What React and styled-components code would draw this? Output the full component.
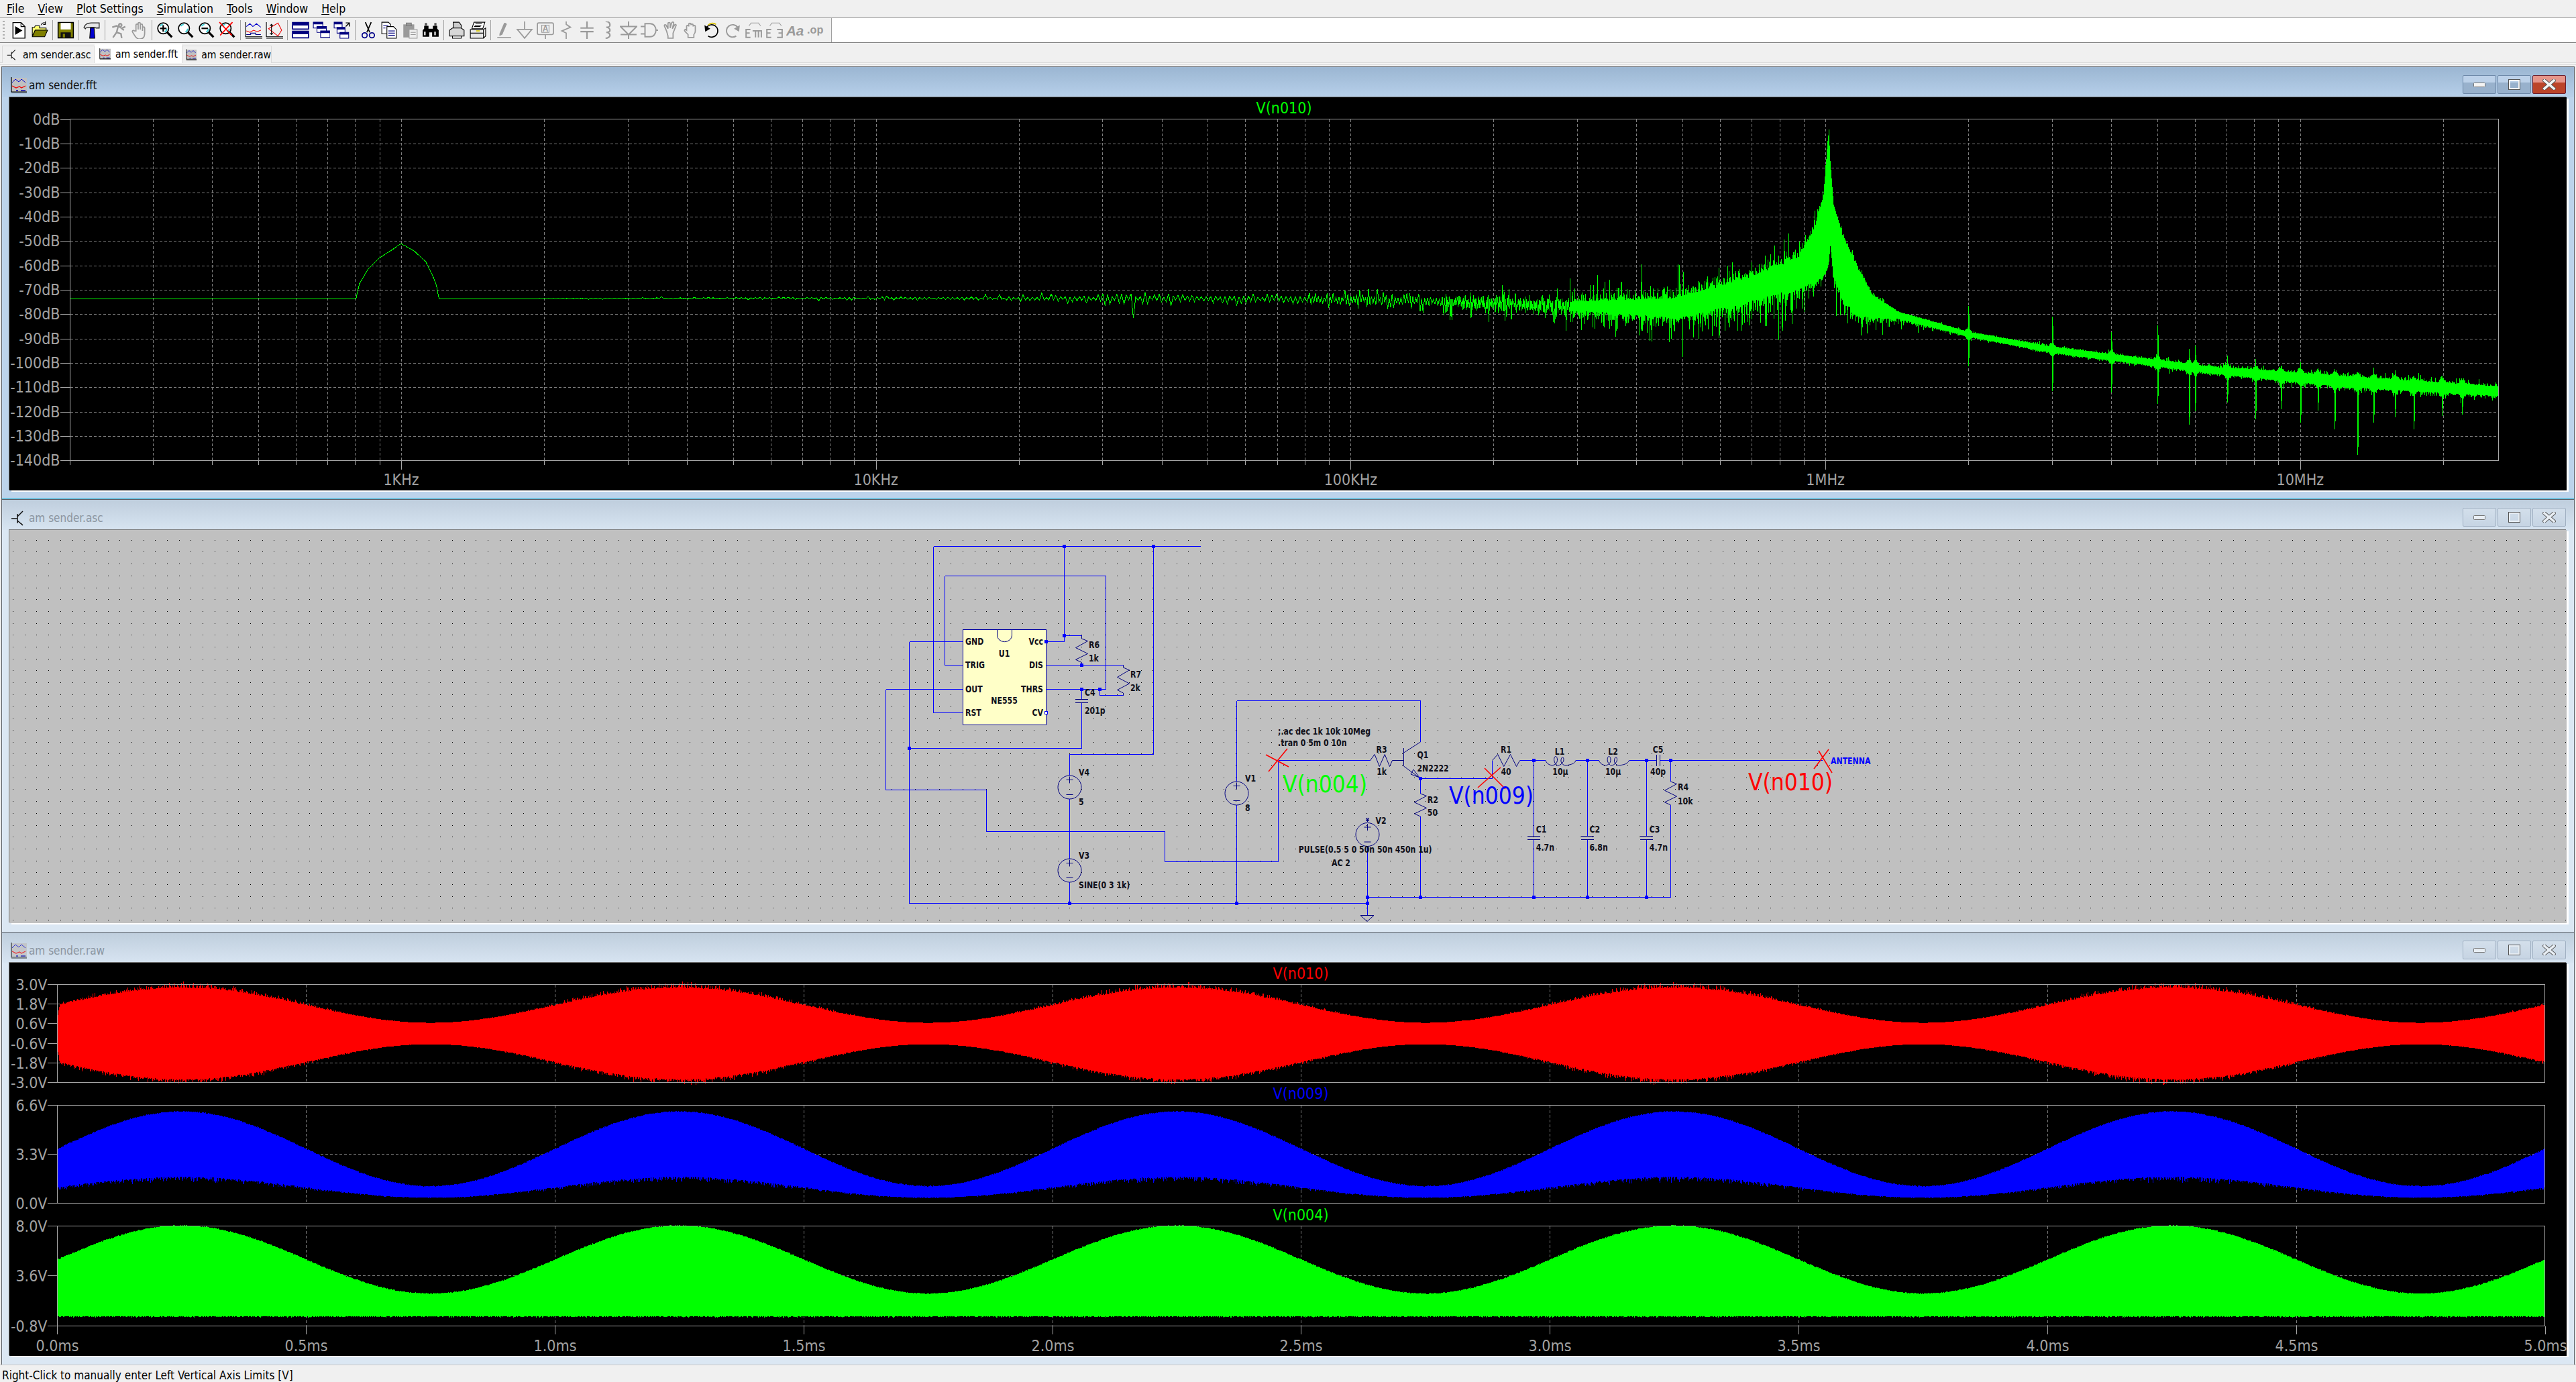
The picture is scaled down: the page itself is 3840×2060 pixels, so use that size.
import React from 'react';
import styled, { createGlobalStyle } from 'styled-components';

const UI_FONT = `"DejaVu Sans", "Liberation Sans", sans-serif`;

const GlobalStyle = createGlobalStyle`
  html, body {
    margin: 0;
    padding: 0;
    background: #f0f0f0;
    overflow: hidden;
  }
`;

const Page = styled.div`
  width: 3840px;
  height: 2060px;
  display: flex;
  flex-direction: column;
  background: #f0f0f0;
  font-family: ${UI_FONT};
  font-stretch: condensed;
  color: #000;
  overflow: hidden;
`;

const MenuBar = styled.div`
  height: 26px;
  display: flex;
  align-items: center;
  gap: 20px;
  padding-left: 10px;
  font-size: 17.6px;
  border-bottom: 1px solid #a0a0a0;
`;

const MenuItem = styled.span`
  white-space: nowrap;
  u { text-underline-offset: 2px; }
`;

const ToolRow = styled.div`
  height: 36px;
  display: flex;
  background: #fff;
  border-bottom: 1px solid #808080;
`;

const Tools = styled.div`
  width: 1239px;
  display: flex;
  align-items: center;
  background: #f0f0f0;
  border-right: 1px solid #a0a0a0;
`;

const Gripper = styled.div`
  width: 3px;
  height: 28px;
  margin: 0 5.5px 0 4px;
  background: repeating-linear-gradient(to bottom, #b0b0b0 0 2px, transparent 2px 5px);
`;

const ToolBtn = styled.div`
  width: 31px;
  height: 36px;
  flex: none;
  display: flex;
  align-items: center;
  justify-content: center;
`;

const ToolSep = styled.div`
  width: 8px;
  height: 30px;
  flex: none;
  background: linear-gradient(#a0a0a0, #a0a0a0) center / 1px 100% no-repeat;
`;

const TabStrip = styled.div`
  height: 35px;
  box-sizing: border-box;
  padding: 2px 0 0 3px;
  display: flex;
  align-items: flex-end;
  background: linear-gradient(to bottom, #f0f0f0 0 29px, #d8d8d8 29px 30px, #f4f4f4 30px 32px, #d8d8d8 32px 33px, #f4f4f4 33px);
`;

const Tab = styled.div`
  height: ${p => (p.$active ? '28px' : '26px')};
  margin-bottom: 5px;
  box-sizing: border-box;
  display: flex;
  align-items: center;
  gap: 7px;
  width: ${p => p.$width}px;
  padding-left: ${p => p.$pad}px;
  font-size: 15.6px;
  white-space: nowrap;
  background: ${p => (p.$active ? '#fff' : '#f0f0f0')};
  border: 1px solid ${p => (p.$active ? '#fff' : '#dadada')};
  border-bottom: none;
`;

const Mdi = styled.div`
  display: flex;
  flex-direction: column;
  padding: 0 2px;
`;

const Win = styled.div`
  height: 645px;
  box-sizing: border-box;
  display: flex;
  flex-direction: column;
  border: 1px solid #5a5f66;
  border-bottom: none;
  background: ${p => (p.$active ? '#bcd3eb' : '#dbe7f3')};
`;

const TitleBar = styled.div`
  height: 45px;
  flex: none;
  box-sizing: border-box;
  display: flex;
  padding: 12px 12px 0 13px;
  background: ${p => (p.$active
    ? 'linear-gradient(to bottom, #9bb6d2, #b7d0ea)'
    : 'linear-gradient(to bottom, #bfcedd, #d7e4f1)')};
`;

const TitleText = styled.div`
  height: 26px;
  padding-top: 2px;
  display: flex;
  align-items: center;
  gap: 3px;
  font-size: 17px;
  color: ${p => (p.$active ? '#111' : '#8b95a0')};
`;

const Caption = styled.div`
  margin-left: auto;
  display: flex;
  gap: 2px;
`;

const CapBtn = styled.div`
  width: 50px;
  height: 28px;
  box-sizing: border-box;
  display: flex;
  align-items: center;
  justify-content: center;
  border-radius: 2px;
  border: 1px solid ${p => (p.$close && p.$active ? '#6b2030' : p.$active ? '#6d88a8' : '#a0b0c2')};
  background: ${p => (p.$close && p.$active
    ? 'linear-gradient(to bottom, #e6958a 0 40%, #bb4429 40%)'
    : p.$active
      ? 'linear-gradient(to bottom, #bcd1e9 0 40%, #98b1cc 40%)'
      : 'linear-gradient(to bottom, #d3dfeb, #c6d4e3)')};
`;

const Client = styled.div`
  width: 3812px;
  height: 586px;
  flex: none;
  margin: 0 11px;
  background: ${p => p.$bg};
  box-shadow: -1px -1px 0 #7a7a7a, 3px 2px 0 #fff;
`;

const WinFoot = styled.div`
  flex: 1;
  border-bottom: ${p => (p.$active ? '1px solid #38b6d6' : 'none')};
`;

const StatusBar = styled.div`
  flex: 1;
  box-sizing: border-box;
  border-top: 1px solid #c8c8c8;
  padding: 5px 0 0 3px;
  font-size: 17px;
  white-space: nowrap;
  overflow: hidden;
`;

const Canvas = styled.svg`
  display: block;
`;

const AxisText = styled.text`
  font-family: ${UI_FONT};
  font-stretch: condensed;
  font-size: 23px;
  dominant-baseline: central;
  fill: ${p => p.$color || '#a3a3a3'};
`;

const PartText = styled.text`
  font-family: ${UI_FONT};
  font-stretch: condensed;
  font-weight: bold;
  font-size: 14.5px;
  dominant-baseline: central;
  fill: ${p => p.$color || '#10101a'};
`;

const ProbeText = styled.text`
  font-family: ${UI_FONT};
  font-stretch: condensed;
  font-size: 35px;
  dominant-baseline: central;
  fill: ${p => p.$color};
`;

const IconGlyph = styled.text`
  font-family: "Liberation Sans", sans-serif;
  font-weight: bold;
  fill: #9a9a9a;
`;

// ---- little icons ----------------------------------------------------------

const G = '#9a9a9a';
const Plain = { fill: 'none', stroke: G, strokeWidth: 1.6 };

const Lens = ({ children }) => (
  <>
    <path d="M14 14l7.5 7.5" stroke="#000" strokeWidth="3" />
    <circle cx="9.5" cy="9.5" r="7.5" fill="#fff" stroke="#000" strokeWidth="1.6" />
    <path d="M5 6.5a6 6 0 0 1 4-2.5M14.5 10a5 5 0 0 1-3 4.5" fill="none" stroke="#30d0d8" strokeWidth="1.6" />
    {children}
  </>
);

const icons = {
  run: <><path d="M4 1.5h11l5.5 5.5v16H4z" fill="#fff" stroke="#000" strokeWidth="1.3" /><path d="M15 1.5V7h5.5" fill="none" stroke="#000" /><path d="M7 6.5l10 6-10 6z" fill="#000" /></>,
  open: <><path d="M2 8h3l1-2h6v3h9v3H6l-4 8z" fill="#ffff70" stroke="#000" /><path d="M6 12h17l-4 9H2z" fill="#808000" stroke="#000" /><path d="M14 5c1-3 4-4 6-3M20 0v4h-3" fill="none" stroke="#000" /></>,
  save: <><path d="M1.5 1.5h21v21h-21z" fill="#808000" stroke="#000" strokeWidth="1.4" /><path d="M5 2h14v9H5z" fill="#fff" /><path d="M5 15h14v8H5z" fill="#111" /><path d="M8 17h3v5H8z" fill="#808000" /></>,
  hammer: <><path d="M1 8c2-5 6-6 10-6h11v7h-4l-3-1H9C6 8 4 8 3 10z" fill="#e8e8e8" stroke="#222" strokeWidth="1.2" /><path d="M10 9h5l1 14H9z" fill="#0000d0" stroke="#000" /></>,
  runner: <path d="M15 3a2 2 0 1 0 .01 0M4 8l6-2 5 2 5 4M12 7l-2 8-5 7M10 15l6 2 1 6M16 10l6-3" fill="none" stroke={G} strokeWidth="2.2" />,
  stop: <path d="M8 13V5a1.4 1.4 0 0 1 3 0v6-8a1.4 1.4 0 0 1 3 0v8-6a1.4 1.4 0 0 1 3 0v8-4a1.4 1.4 0 0 1 3 0v7c0 5-2 8-6 8h-2c-3 0-4-2-6-5l-3-5c0-2 2-2 3-1z" {...Plain} />,
  zoomIn: <Lens><path d="M5 9.5h9M9.5 5v9" stroke="#000" strokeWidth="2" /></Lens>,
  zoomRect: <Lens />,
  zoomOut: <Lens><path d="M5 9.5h9" stroke="#000" strokeWidth="2" /></Lens>,
  zoomOff: <Lens><path d="M1 1l17 18M19 1L2 19" stroke="#f00" strokeWidth="1.6" /></Lens>,
  auto: <><path d="M1 1v20h23M1 23h23" fill="none" stroke="#000" /><path d="M2 7l5-4 4 4 5-4 6 5" fill="none" stroke="#00c" /><path d="M2 13l5 2 5-3 5 2 5-2" fill="none" stroke="#e00" /><path d="M2 18h6v-2h7v2h7" fill="none" stroke="#008" /></>,
  vert: <><path d="M1 1v20h23M1 23h23" fill="none" stroke="#000" /><path d="M4 10L17 2l5 10-5 8z" fill="none" stroke="#e00" /><path d="M8 4v14M6 6l2-2 2 2M6 16l2 2 2-2" fill="none" stroke="#000" /></>,
  tile: <><path d="M1 1.5h22v9H1zM1 13.5h22v9H1z" fill="#fff" stroke="#000080" strokeWidth="1.6" /><path d="M1 1.5h22v4H1zM1 13.5h22v4H1z" fill="#000080" /></>,
  cascade: <><path d="M1 1h13v8H1zM6 7h13v8H6zM11 13h13v9H11z" fill="#fff" stroke="#000080" /><path d="M1 1h13v3H1zM6 7h13v3H6zM11 13h13v3H11z" fill="#000080" /></>,
  arrange: <><path d="M1 1h11v8H1zM5 8h11v8H5zM9 15h12v8H9z" fill="#fff" stroke="#000080" /><path d="M1 1h11v3H1zM5 8h11v3H5zM9 15h12v3H9z" fill="#000080" /><path d="M22 7V2h-5M22 2l-5 5" fill="none" stroke="#000" strokeWidth="1.3" /></>,
  cut: <><path d="M8 1l6 14M16 1l-6 14" stroke="#000" strokeWidth="1.6" /><circle cx="7" cy="19" r="3.5" fill="none" stroke="#008" strokeWidth="1.6" /><circle cx="17" cy="19" r="3.5" fill="none" stroke="#008" strokeWidth="1.6" /></>,
  copy: <><path d="M2 1h9l3 3v13H2z" fill="#fff" stroke="#000" /><path d="M9 7h9l4 4v12H9z" fill="#fff" stroke="#000" /><path d="M4 6h7M4 9h3M11 13h9M11 16h9M11 19h9" stroke="#000080" /></>,
  paste: <><path d="M3 4h15v18H3z" fill={G} /><path d="M7 2h7v4H7z" fill={G} stroke="#777" /><path d="M11 11h11v12H11z" fill="#eee" stroke={G} /><path d="M13 15h7M13 18h7" stroke={G} /></>,
  find: <><path d="M3 6h6v4l1 2v9H1v-9l2-2zM15 6h6v4l2 2v9h-9v-9l1-2z" fill="#000" /><path d="M9 10h6v5H9z" fill="#000" /><path d="M4 2h3v4H4zM17 2h3v4h-3z" fill="#555" /><path d="M3 14h2v5H3zM17 14h2v5h-2z" fill="#fff" /></>,
  print: <><path d="M7 1h8l3 4v6H7z" fill="#ccc" stroke="#000" /><path d="M2 12l4-3h12l4 3v8H2z" fill="#d8d8d8" stroke="#000" /><path d="M6 20h12v3H6z" fill="#fff" stroke="#000" /></>,
  setup: <><path d="M7 1h15l-3 9H4z" fill="#fff" stroke="#000" /><path d="M9 3h9M8 5h9M7 7h9" stroke="#000" /><path d="M2 11h18l3-2v11l-3 3H2z" fill="#e8e8e8" stroke="#000" /><path d="M2 16h18M20 11v12" stroke="#000" /><path d="M10 13h5" stroke="#d8c800" strokeWidth="1.6" /></>,
  pencil: <><path d="M6 17L12 3c1-2 4-1 4 1l-6 14-4 2z" fill={G} /><path d="M3 22h19" stroke={G} strokeWidth="1.4" /></>,
  ground: <path d="M12 0v11M2 11h20L12 23z" {...Plain} />,
  label: <><path d="M12 18v6M3 2h18a2 2 0 0 1 2 2v12a2 2 0 0 1-2 2H3a2 2 0 0 1-2-2V4a2 2 0 0 1 2-2z" {...Plain} /><path d="M7 5h10v10H7z" {...Plain} strokeWidth="1" /><IconGlyph x="12" y="14" fontSize="11" textAnchor="middle">A</IconGlyph></>,
  res: <path d="M12 0v4l6 4-12 5 6 3v8" {...Plain} />,
  cap: <path d="M12 0v9M3 9h18M3 14h18M12 14v10" {...Plain} strokeWidth="2" />,
  ind: <path d="M9 0c5 0 6 3 6 5s-3 3-5 3c3 0 5 2 5 4s-2 3-5 3c3 0 5 2 5 4s-3 4-6 4" {...Plain} strokeWidth="2" />,
  diode: <path d="M12 0v7M1 7h22L12 18zM1 18h22M12 18v6" {...Plain} strokeWidth="1.8" />,
  gate: <path d="M6 3h7c5 0 8 4 8 9s-3 9-8 9H6zM0 7h6M0 17h6M21 12h3" {...Plain} strokeWidth="1.8" />,
  move: <path d="M7 13L4 6c0-2 2-2 3 0l2 4 0-7c0-2 3-2 3 0v6l2-7c1-2 3-1 3 0l-2 8 3-5c1-2 3 0 2 1l-4 10v7H9v-3z" {...Plain} />,
  drag: <path d="M6 12V7c0-2 3-2 3 0V4c0-2 3-2 3 0v1c0-2 3-2 3 0v2c0-2 3-2 3 0v6c0 3-1 4-2 5v4H8v-4l-4-4c-2-2 0-4 2-2z" {...Plain} />,
  undo: <><path d="M5 8a8.5 8.5 0 1 1 2 12" fill="none" stroke="#000" strokeWidth="1.6" /><path d="M7 5a8.5 8.5 0 0 1 11-1" fill="none" stroke="#d8c000" strokeWidth="1.6" /><path d="M2 5l1 9 7-4z" fill="#000" /></>,
  redo: <><path d="M19 8a8.5 8.5 0 1 0-2 12" {...Plain} strokeWidth="1.8" /><path d="M22 5l-1 9-7-4z" fill={G} /></>,
  em: <><path d="M6 6l3-4h10l3 4" fill="none" stroke={G} strokeWidth="1" /><path d="M8 11H2v11h6M2 16h5" {...Plain} strokeWidth="1.8" /><path d="M11 13h12v9M15 13v9M19 13v9" {...Plain} strokeWidth="1.8" /></>,
  eg: <><path d="M6 6l3-4h10l3 4" fill="none" stroke={G} strokeWidth="1" /><path d="M8 11H2v11h6M2 16h5" {...Plain} strokeWidth="1.8" /><path d="M16 11h7v11h-7M18 16h5" {...Plain} strokeWidth="1.8" /></>,
  text: <IconGlyph x="0" y="19" fontSize="19" fontStyle="italic">Aa</IconGlyph>,
  op: <IconGlyph x="0" y="17" fontSize="15">.op</IconGlyph>,
};

const Icon = ({ name }) => (
  <svg width="26" height="26" viewBox="0 0 24 24" shapeRendering="geometricPrecision">{icons[name]}</svg>
);

const PlotIcon = ({ size = 24, faded }) => (
  <svg width={size} height={size} viewBox="0 0 24 24" opacity={faded ? 0.75 : 1}>
    <path d="M1 1h23v21H1z" fill="#c0c0c0" />
    <path d="M1 0v22h23M1 24h23" fill="none" stroke="#000" strokeWidth="1.2" />
    <path d="M2 8l5-5 5 4 4-4 6 5" fill="none" stroke="#00c" />
    <path d="M2 13l6 3 5-2 3 2 6-3" fill="none" stroke="#e00" strokeWidth="1.3" />
    <path d="M8 20h3M15 20h7" stroke="#00a" strokeWidth="1.3" />
  </svg>
);

const SchemIcon = ({ size = 24 }) => (
  <svg width={size} height={size} viewBox="0 0 24 24">
    <path d="M1 13h9M10 6v14M10 10l8-8M10 16l8 7M15 20l3 3" fill="none" stroke="#111" strokeWidth="1.5" />
  </svg>
);

const toolList = [
  'run', 'open', '|', 'save', '|', 'hammer', '|', 'runner', 'stop', '|',
  'zoomIn', 'zoomRect', 'zoomOut', 'zoomOff', '|', 'auto', 'vert', '|',
  'tile', 'cascade', 'arrange', '|', 'cut', 'copy', 'paste', 'find', '|',
  'print', 'setup', '|', 'pencil', 'ground', 'label', 'res', 'cap', 'ind', 'diode',
  'gate', 'move', 'drag', 'undo', 'redo', 'em', 'eg', 'text', 'op',
];

// ---- data for the plots ----------------------------------------------------

const makeRandom = seed => () => {
  seed = (seed + 0x6d2b79f5) | 0;
  let t = Math.imul(seed ^ (seed >>> 15), 1 | seed);
  t = (t + Math.imul(t ^ (t >>> 7), 61 | t)) ^ t;
  return ((t ^ (t >>> 14)) >>> 0) / 4294967296;
};

const r1 = n => n.toFixed(1);

// envelope of a waveform, one vertical stroke per pixel column
const envelope = (seed, top, bottom) => {
  const rand = makeRandom(seed);
  let d = '';
  for (let x = 86; x <= 3793; x++) {
    const s = Math.sin((2 * Math.PI * (x - 85.3)) / 741.6);
    const [a, b] = [top(s, x, rand), bottom(s, x, rand)];
    d += `M${x} ${r1(a)}V${r1(b)}`;
  }
  return d;
};

const redAmp = (s, x) => Math.min(42 + 26 * s, x < 90 ? 20 + (x - 85) * 6 : 999);

const redWave = envelope(
  11,
  (s, x, r) => 1540.5 - redAmp(s, x) - r() * r() * (1 + s) * 5,
  (s, x, r) => 1540.5 + redAmp(s, x) + r() * r() * (1 + s) * 5,
);
const blueWave = envelope(
  23,
  (s, x, r) => 1713 - 55.7 * s - r() * 1.4,
  (s, x, r) => 1770.5 - 15.5 * s + r() * r() * (1.3 + s) * 4 - 1,
);
const greenWave = envelope(
  37,
  (s, x, r) => 1878 - 50.7 * s - r() * 1.4,
  (s, x, r) => 1962 + r() * r() * 2,
);

const fftX = f => 598 + 707.7 * Math.log10(f / 1000);

// x, solid band top, solid band bottom, spike size up, spike size down
const fftBand = [
  [783, 445, 445.5, 0, 0],
  [1100, 444, 445, 0.5, 0.5],
  [1500, 444, 446, 1.2, 1.2],
  [1650, 443, 447, 2.5, 2.5],
  [1800, 443, 447, 2.5, 3],
  [2000, 444, 449, 3.5, 4],
  [2100, 445, 451, 4.5, 5],
  [2250, 449, 457, 5, 6.5],
  [2340, 450, 462, 7, 8],
  [2400, 448, 466, 8, 9],
  [2500, 445, 474, 10, 11],
  [2600, 417, 450, 10, 14],
  [2680, 385, 430, 8, 14],
  [2705, 340, 420, 5, 8],
  [2718, 290, 410, 3, 5],
  [2724, 210, 400, 0, 0],
  [2726, 193, 390, 0, 0],
  [2728, 240, 367, 0, 0],
  [2733, 305, 410, 0, 6],
  [2746, 350, 445, 3, 10],
  [2769, 400, 470, 3, 10],
  [2791, 440, 474, 2, 7],
  [2829, 465, 475, 1, 3],
  [2935, 495, 502, 0.7, 0.7],
  [3060, 517, 526, 0.8, 0.8],
  [3300, 547, 557, 1.4, 1.4],
  [3500, 561, 577, 2, 2],
  [3724, 576, 590, 2, 2],
];

const bandAt = x => {
  let i = 0;
  while (i < fftBand.length - 2 && fftBand[i + 1][0] < x) i++;
  const [a, b] = [fftBand[i], fftBand[i + 1]];
  const k = (x - a[0]) / (b[0] - a[0]);
  return a.slice(1).map((v, n) => v + (b[n + 1] - v) * k);
};

const harmonics = [
  [2934, 456, 546], [3059, 472, 583], [3147, 495, 585], [3216, 485, 602], [3263, 520, 633], [3272, 515, 613],
  [3320, 530, 600], [3362, 535, 625], [3400, 545, 610], [3429, 540, 630], [3455, 552, 612], [3480, 550, 640],
  [3514, 555, 678], [3538, 560, 630], [3570, 565, 622], [3598, 565, 640], [3640, 572, 620], [3670, 572, 618],
];

const wingAt = x => {
  const h = harmonics.find(([hx]) => Math.abs(hx - x) < 6);
  return h ? 6 * (1 - Math.abs(h[0] - x) / 6) : 0;
};

const fftTrace = (() => {
  const rand = makeRandom(5);
  const tail = () => -Math.log(1 - rand() * 0.9995);
  // the line below the carrier, still a single trace
  let d = 'M104.6 445.6H530.6L535.7 423L548.5 401.4L566.3 384L582 374L598 363.2L617.3 374L635 390.5L645.4 412L650.5 425L654.6 445.6H783';
  let up = true;
  let x = 783;
  while (x < 2340) {
    const [t, b, u, w] = bandAt(x);
    const burst = x > 1650 && x < 1700 ? 2.5 : 1;
    const y = up ? t - u * tail() * burst : Math.min(b + w * tail() * burst, 520);
    d += `L${r1(x)} ${r1(y)}`;
    up = !up;
    x += x < 1950 ? 3.5 : x < 2150 ? 2.2 : 1.2;
  }
  for (let c = 2340; c <= 3724; c++) {
    const [t, b, u, w] = bandAt(c);
    const wing = wingAt(c);
    const low = c < 2820 ? 556 : 999;
    d += `M${c} ${r1(t - wing - u * tail())}V${r1(Math.min(b + wing + w * tail(), low))}`;
  }
  harmonics.forEach(([hx, t, b]) => {
    d += `M${hx} ${t}V${b}M${hx + 1} ${t + 14}V${b - 12}`;
  });
  return d;
})();

const fftDecades = [
  ['1KHz', 1e3], ['10KHz', 1e4], ['100KHz', 1e5], ['1MHz', 1e6], ['10MHz', 1e7],
];

const fftLines = (() => {
  const list = [];
  [1e2, 1e3, 1e4, 1e5, 1e6, 1e7].forEach(d => {
    for (let m = 1; m < 10; m++) {
      const x = fftX(m * d);
      if (x > 106 && x < 3722) list.push({ x: Math.round(x) + 0.5, major: m === 1 });
    }
  });
  return list;
})();

const dbLevels = Array.from({ length: 15 }, (_, i) => i * -10);
const dbY = db => Math.round(177.5 - db * 3.635) + 0.5;

const TIME_X = Array.from({ length: 11 }, (_, i) => Math.round(85.3 + i * 370.82) + 0.5);

const panes = [
  {
    name: 'V(n010)', color: '#ff0000', titleY: 1451, top: 1467.5, bottom: 1613.5, wave: redWave,
    ticks: [['3.0V', 1467.5], ['1.8V', 1496.5], ['0.6V', 1525.5], ['-0.6V', 1555.5], ['-1.8V', 1584.5], ['-3.0V', 1613.5]],
  },
  {
    name: 'V(n009)', color: '#0000ff', titleY: 1630, top: 1647.5, bottom: 1793.5, wave: blueWave,
    ticks: [['6.6V', 1647.5], ['3.3V', 1720.5], ['0.0V', 1793.5]],
  },
  {
    name: 'V(n004)', color: '#00ff00', titleY: 1811, top: 1827.5, bottom: 1976.5, wave: greenWave,
    ticks: [['8.0V', 1827.5], ['3.6V', 1901.5], ['-0.8V', 1976.5]],
  },
];

// ---- charts ----------------------------------------------------------------

const FRAME = '#a6a6a6';
const GRID = '#7c7c7c';

const FftPlot = () => (
  <Canvas width="3812" height="586" viewBox="14 145 3812 586" shapeRendering="crispEdges">
    <path d={fftLines.map(l => `M${l.x} 177.5V686.5`).join('')} stroke={GRID} strokeDasharray="4 3" />
    <path d={dbLevels.slice(1, -1).map(db => `M105 ${dbY(db)}H3724`).join('')} stroke={GRID} strokeDasharray="4 3" />
    <path d={fftTrace} fill="none" stroke="#00ff00" />
    <path d="M104.5 177.5H3724.5V686.5H104.5Z" fill="none" stroke={FRAME} />
    <path d={dbLevels.map(db => `M90 ${dbY(db)}H104`).join('')} stroke={FRAME} />
    <path d={fftLines.map(l => `M${l.x} 687V${l.major ? 700 : 693}`).join('')} stroke={FRAME} />
    <path d="M104.5 687V693" stroke={FRAME} />
    {dbLevels.map(db => (
      <AxisText key={db} x="89.5" y={dbY(db) - 1} textAnchor="end">{db}dB</AxisText>
    ))}
    {fftDecades.map(([label, f]) => (
      <AxisText key={label} x={fftX(f)} y="715" textAnchor="middle">{label}</AxisText>
    ))}
    <AxisText x="1914" y="161" textAnchor="middle" $color="#00ff00">V(n010)</AxisText>
  </Canvas>
);

const TransientPlot = () => (
  <Canvas width="3812" height="586" viewBox="14 1435 3812 586" shapeRendering="crispEdges">
    {panes.map(p => (
      <g key={p.name}>
        <path d={TIME_X.slice(1, -1).map(x => `M${x} ${p.top}V${p.bottom}`).join('')} stroke={GRID} strokeDasharray="4 3" />
        <path d={p.ticks.slice(1, -1).map(t => `M86 ${t[1]}H3793`).join('')} stroke={GRID} strokeDasharray="4 3" />
        <path d={p.wave} fill="none" stroke={p.color} />
        <path d={`M85.5 ${p.top}H3793.5V${p.bottom}H85.5Z`} fill="none" stroke={FRAME} />
        <path d={p.ticks.map(t => `M71 ${t[1]}H85`).join('')} stroke={FRAME} />
        {p.ticks.map(t => (
          <AxisText key={t[0]} x="70.5" y={t[1]} textAnchor="end">{t[0]}</AxisText>
        ))}
        <AxisText x="1939" y={p.titleY} textAnchor="middle" $color={p.color}>{p.name}</AxisText>
      </g>
    ))}
    <path d={TIME_X.map(x => `M${x} 1977V1989`).join('')} stroke={FRAME} />
    {TIME_X.map((x, i) => (
      <AxisText key={x} x={x} y="2006" textAnchor="middle">{(i / 2).toFixed(1)}ms</AxisText>
    ))}
  </Canvas>
);

// ---- schematic -------------------------------------------------------------

const gridDots = (() => {
  let d = '';
  for (let y = 788; y < 1377; y += 17.7) {
    for (let x = 19; x < 3826; x += 17.7) {
      if (y > 791) d += `M${Math.round(x)} ${Math.round(y)}h1v1h-1z`;
    }
  }
  return d;
})();

const WIRES = `
  M1391.5 815.5H1790
  M1391.5 815.5V1063.5H1435
  M1586.5 815.5V957.5H1559
  M1586.5 948.5H1612.5
  M1408.5 859.5H1648.5V1028.5H1559
  M1408.5 859.5V992.5H1435
  M1355.5 957.5H1435
  M1355.5 957.5V1347.5H2038.5
  M1320.5 1028.5H1435
  M1320.5 1028.5V1178.5H1470.5V1240.5H1736.5V1285.5H1905.5V1134.5
  M1559 992.5H1674.5
  M1674.5 1037.5H1639.5V1028.5
  M1612.5 1028.5V1043
  M1612.5 1048V1116.5H1355.5
  M1719.5 815.5V1125.5H1594.5V1157
  M1594.5 1191.5V1281
  M1594.5 1315.5V1347.5
  M1843.5 1045.5V1165.5
  M1843.5 1045.5H2117.5V1107
  M1843.5 1200.5V1347.5
  M1905.5 1134.5H2042.5
  M2117.5 1161.5H2224.5V1134.5
  M2265.5 1134.5H2304
  M2348.5 1134.5H2383.5
  M2428.5 1134.5H2469.5
  M2474.5 1134.5H2716.5
  M2117.5 1161.5V1184
  M2117.5 1218V1338.5
  M2286.5 1134.5V1247
  M2286.5 1252V1338.5
  M2366.5 1134.5V1247
  M2366.5 1252V1338.5
  M2454.5 1134.5V1247
  M2454.5 1252V1338.5
  M2490.5 1134.5V1166
  M2490.5 1201V1338.5H2038.5
  M2038.5 1262.5V1365
`;

const zigV = (x, y0, y1) => {
  const f = [0.1, 0.38, 0.63, 0.88];
  const h = y1 - y0;
  return `M${x} ${y0}` + f.map((k, i) => `L${x + (i % 2 ? -9 : 9)} ${y0 + h * k}`).join('') + `L${x} ${y1}`;
};

const zigH = (x0, x1, y) => {
  const f = [0.2, 0.42, 0.66, 0.88];
  const w = x1 - x0;
  return `M${x0} ${y}` + f.map((k, i) => `L${x0 + w * k} ${y + (i % 2 ? 9 : -9)}`).join('') + `L${x1} ${y}`;
};

const coil = x =>
  `M${x} 1134.5c2 6 9 9 14 6c5-3 4-12 1-12c-3 0-4 9 2 13c4 2 10-4 10-8c0-5-3-5-4 0c-1 5 4 10 10 8c5-1 10-2 12-7`;

const OUTLINES = [
  'M1612.5 948.5V953', zigV(1612.5, 953, 988.5), 'M1612.5 988.5V992.5',
  zigV(1674.5, 996, 1034), 'M1674.5 992.5V996M1674.5 1034V1037.5',
  zigH(2042.5, 2075.5, 1134.5), 'M2075.5 1134.5H2092',
  zigH(2224.5, 2265.5, 1134.5),
  zigV(2117.5, 1184, 1218),
  zigV(2490.5, 1166, 1201),
  coil(2304), coil(2383.5),
  // transistor
  'M2092.5 1116V1143M2092.5 1123L2117.5 1107M2092.5 1143L2117.5 1161.5',
  'M2107 1148L2116 1160L2103 1155Z',
  // capacitors
  'M1603 1043.5H1622M1603 1048.5H1622',
  'M2277 1247.5H2296M2277 1252.5H2296',
  'M2357 1247.5H2376M2357 1252.5H2376',
  'M2445 1247.5H2464M2445 1252.5H2464',
  'M2469.5 1126V1143M2474.5 1126V1143',
  // ground and the pin of V2
  'M2028 1365.5H2048L2038 1374.5Z',
  'M2038.5 1226V1222',
].join('');

const SOURCES = [
  [1594.5, 1174.5], [1594.5, 1298.5], [1843.5, 1183.5], [2038.5, 1245],
];

const DOTS = [
  [1586.5, 815.5], [1719.5, 815.5], [1586.5, 948.5], [1559.5, 957.5], [1612.5, 992.5],
  [1612.5, 1028.5], [1639.5, 1028.5], [1355.5, 1116.5], [1594.5, 1347.5], [1843.5, 1347.5],
  [2038.5, 1347.5], [2038.5, 1338.5], [2117.5, 1338.5], [2286.5, 1338.5], [2366.5, 1338.5],
  [2454.5, 1338.5], [2117.5, 1161.5], [2286.5, 1134.5], [2366.5, 1134.5], [2454.5, 1134.5],
  [2490.5, 1134.5],
];

// text, x, y, anchor
const LABELS = [
  ['GND', 1439, 957.6], ['TRIG', 1439, 992.4], ['OUT', 1439, 1028.4], ['RST', 1439, 1063.6],
  ['Vcc', 1555, 957.6, 'end'], ['DIS', 1555, 992.4, 'end'], ['THRS', 1555, 1028.4, 'end'], ['CV', 1555, 1063.6, 'end'],
  ['U1', 1497, 975.6, 'middle'], ['NE555', 1497, 1045.6, 'middle'],
  ['R6', 1623, 961.8], ['1k', 1623, 981.7], ['R7', 1685, 1006.2], ['2k', 1685, 1026.5],
  ['C4', 1617, 1033], ['201p', 1617, 1059.8],
  ['V4', 1608, 1152.4], ['5', 1608, 1196.4], ['V3', 1608, 1276.4], ['SINE(0 3 1k)', 1608, 1320.4],
  ['V1', 1856, 1161.6], ['8', 1856, 1205.6],
  [';.ac dec 1k 10k 10Meg', 1905, 1090.7], ['.tran 0 5m 0 10n', 1905, 1107.7],
  ['R3', 2059.6, 1117.7, 'middle'], ['1k', 2059.6, 1150.7, 'middle'],
  ['Q1', 2112.5, 1126], ['2N2222', 2112.5, 1145.7],
  ['R1', 2245, 1117.7, 'middle'], ['40', 2245, 1150.7, 'middle'],
  ['L1', 2325, 1120.7, 'middle'], ['10µ', 2326, 1150.7, 'middle'],
  ['L2', 2404.6, 1120.7, 'middle'], ['10µ', 2404.6, 1150.7, 'middle'],
  ['C5', 2471.6, 1117.7, 'middle'], ['40p', 2471.6, 1150.7, 'middle'],
  ['R2', 2127.8, 1192.7], ['50', 2127.8, 1212.3], ['R4', 2501, 1174.3], ['10k', 2501, 1194.7],
  ['C1', 2289.8, 1236.7], ['4.7n', 2289.8, 1263.7], ['C2', 2369.5, 1236.7], ['6.8n', 2369.5, 1263.7],
  ['C3', 2458.8, 1236.7], ['4.7n', 2458.8, 1263.7],
  ['V2', 2050.6, 1223.7], ['PULSE(0.5 5 0 50n 50n 450n 1u)', 1935.8, 1266.7], ['AC 2', 1985, 1286.7],
];

const PROBES = [
  { name: 'V(n004)', color: '#00ff00', x: 1912, y: 1170, mark: 'M1887 1126L1921 1144M1919 1117L1891 1151' },
  { name: 'V(n009)', color: '#0000ff', x: 2160, y: 1187, mark: 'M2213 1146L2244 1177M2237 1145L2203 1175' },
  { name: 'V(n010)', color: '#ff0000', x: 2606, y: 1167, mark: 'M2726 1118L2704 1147M2711 1120L2731 1153' },
];

const SQUEEZE = 0.84;

const Schematic = () => (
  <Canvas width="3812" height="586" viewBox="14 791 3812 586">
    <path d={gridDots} fill="#000" shapeRendering="crispEdges" />
    <g shapeRendering="crispEdges">
      <rect x="1435.5" y="939.5" width="124" height="142" fill="#ffffc8" stroke="#0000a0" />
      <path d={WIRES} fill="none" stroke="#0000ff" />
    </g>
    <path d="M1486.5 940v8a8 7 0 0 0 22 0v-8" fill="#ffffc8" stroke="#000080" />
    <path d={OUTLINES} fill="none" stroke="#000080" />
    {SOURCES.map(([x, y]) => (
      <g key={y} fill="none" stroke="#000080">
        <circle cx={x} cy={y} r="17.5" />
        <path d={`M${x - 5} ${y - 11}h10M${x} ${y - 16}v10M${x - 5} ${y + 11}h10`} />
      </g>
    ))}
    <g shapeRendering="crispEdges">
      {DOTS.map(([x, y]) => (
        <rect key={`${x}-${y}`} x={x - 2.5} y={y - 2.5} width="5" height="5" fill="#0000ff" />
      ))}
      <rect x="1557.5" y="1061.5" width="4" height="4" fill="#fff" stroke="#0000ff" />
      <rect x="2036.5" y="1220.5" width="4" height="4" fill="none" stroke="#000080" />
    </g>
    {LABELS.map(([text, x, y, anchor = 'start']) => (
      <g key={`${text}-${x}`} transform={`translate(${x} ${y}) scale(${SQUEEZE} 1)`}>
        <PartText textAnchor={anchor}>{text}</PartText>
      </g>
    ))}
    <g transform={`translate(2729 1134.7) scale(${SQUEEZE} 1)`}>
      <PartText $color="#0000ff">ANTENNA</PartText>
    </g>
    {PROBES.map(p => (
      <g key={p.name}>
        <path d={p.mark} stroke="#ff0000" strokeWidth="1.6" fill="none" />
        <ProbeText x={p.x} y={p.y} $color={p.color}>{p.name}</ProbeText>
      </g>
    ))}
  </Canvas>
);

// ---- window chrome ---------------------------------------------------------

const CapGlyph = ({ kind, active }) => {
  const fill = active ? '#f4f4f4' : '#e8eef4';
  const stroke = '#555';
  if (kind === 'min') return <svg width="18" height="7"><rect x=".5" y=".5" width="17" height="6" fill={fill} stroke="#777" rx="1" /></svg>;
  if (kind === 'max') return <svg width="18" height="16"><rect x="1.5" y="1.5" width="15" height="13" fill="none" stroke={fill} strokeWidth="3" /><rect x=".5" y=".5" width="17" height="15" fill="none" stroke={stroke} /></svg>;
  return (
    <svg width="20" height="16" viewBox="0 0 20 16">
      <path d="M3 2l14 12M17 2L3 14" stroke={stroke} strokeWidth="5.4" strokeLinecap="square" />
      <path d="M3 2l14 12M17 2L3 14" stroke={fill} strokeWidth="3.6" strokeLinecap="square" />
    </svg>
  );
};

const Window = ({ title, icon, active, bg, children }) => (
  <Win $active={active}>
    <TitleBar $active={active}>
      <TitleText $active={active}>{icon}{title}</TitleText>
      <Caption>
        <CapBtn $active={active}><CapGlyph kind="min" active={active} /></CapBtn>
        <CapBtn $active={active}><CapGlyph kind="max" active={active} /></CapBtn>
        <CapBtn $active={active} $close><CapGlyph kind="close" active={active} /></CapBtn>
      </Caption>
    </TitleBar>
    <Client $bg={bg}>{children}</Client>
    <WinFoot $active={active} />
  </Win>
);

const App = () => (
  <Page>
    <GlobalStyle />
    <MenuBar>
      <MenuItem><u>F</u>ile</MenuItem>
      <MenuItem><u>V</u>iew</MenuItem>
      <MenuItem><u>P</u>lot Settings</MenuItem>
      <MenuItem><u>S</u>imulation</MenuItem>
      <MenuItem><u>T</u>ools</MenuItem>
      <MenuItem><u>W</u>indow</MenuItem>
      <MenuItem><u>H</u>elp</MenuItem>
    </MenuBar>
    <ToolRow>
      <Tools>
        <Gripper />
        {toolList.map((name, i) => (name === '|'
          ? <ToolSep key={i} />
          : <ToolBtn key={i}><Icon name={name} /></ToolBtn>))}
      </Tools>
    </ToolRow>
    <TabStrip>
      <Tab $width={138} $pad={6}><SchemIcon size={17} />am sender.asc</Tab>
      <Tab $width={130} $pad={6} $active><PlotIcon size={17} />am sender.fft</Tab>
      <Tab $width={134} $pad={5}><PlotIcon size={17} />am sender.raw</Tab>
    </TabStrip>
    <Mdi>
      <Window title="am sender.fft" icon={<PlotIcon />} active bg="#000"><FftPlot /></Window>
      <Window title="am sender.asc" icon={<SchemIcon />} bg="#c0c0c0"><Schematic /></Window>
      <Window title="am sender.raw" icon={<PlotIcon faded />} bg="#000"><TransientPlot /></Window>
    </Mdi>
    <StatusBar>Right-Click to manually enter Left Vertical Axis Limits [V]</StatusBar>
  </Page>
);

export default App;
